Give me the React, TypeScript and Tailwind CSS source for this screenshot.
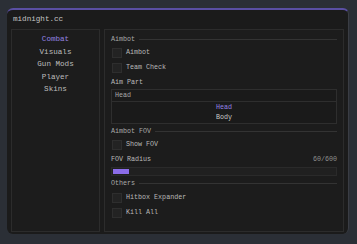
import type React from "react"

const tabs = ["Combat", "Visuals", "Gun Mods", "Player", "Skins"]

const Section: React.FC<{ title: string }> = ({ title }) => (
  <div className="flex items-center gap-[4px] h-[12px]">
    <span className="text-[#a9a9a9]">{title}</span>
    <div className="flex-1 h-px bg-[#333333]"></div>
  </div>
)

const Check: React.FC<{ label: string }> = ({ label }) => (
  <div className="flex items-center gap-[4px] h-[15px] pl-[1px]">
    <div className="w-[10px] h-[10px] bg-[#232323] border border-[#2e2e2e]"></div>
    <span className="text-[#b8b8b8]">{label}</span>
  </div>
)

export default function App() {
  return (
    <div className="w-[357px] h-[244px] bg-[#2b2f36] pt-[8px] pl-[7px]" style={{ fontFamily: '"Liberation Mono", "DejaVu Sans Mono", monospace' }}>
      <div className="w-[342px] h-[226px] bg-[#1b1b1b] rounded-[6px] border-t-2 border-[#5a4fa3] border-r border-r-[#3a3d44] flex flex-col">
        <div className="h-[19px] flex items-center pl-[6px] text-[7.6px] text-[#c4c4c4]">midnight.cc</div>
        <div className="flex-1 flex gap-[4px] px-[4px] pb-[2px]">
          {/* sidebar */}
          <div className="w-[89px] border border-[#2c2c2c] bg-[#1c1c1c] flex flex-col items-center pt-[3px] text-[7.6px]">
            {tabs.map((t, i) => (
              <div key={t} className={`h-[12.5px] leading-[12.5px] ${i === 0 ? "text-[#9482e2]" : "text-[#bcbcbc]"}`}>{t}</div>
            ))}
          </div>

          {/* content */}
          <div className="flex-1 border border-[#2c2c2c] bg-[#1c1c1c] px-[6px] pt-[3px] text-[6.7px] flex flex-col">
            <Section title="Aimbot" />
            <div>
              <Check label="Aimbot" />
              <Check label="Team Check" />
            </div>
            <div className="h-[13px] flex items-center mt-[1px] text-[#bababa]">Aim Part</div>
            <div className="border border-[#2e2e2e] bg-[#1a1a1a]">
              <div className="h-[12px] flex items-center pl-[3px] border-b border-[#2e2e2e] text-[#a8a8a8]">Head</div>
              <div className="h-[10px] flex items-center justify-center text-[#9482e2]">Head</div>
              <div className="h-[11px] flex items-center justify-center text-[#c8c8c8]">Body</div>
            </div>
            <div className="mt-[1px]">
              <Section title="Aimbot FOV" />
            </div>
            <Check label="Show FOV" />
            <div className="h-[13px] flex items-center justify-between mt-[1px] text-[#bababa]">
              <span>FOV Radius</span>
              <span className="text-[#8e8e8e]">60/600</span>
            </div>
            <div className="h-[9px] bg-[#202020] border border-[#2a2a2a] p-px mt-[1px]">
              <div className="h-full w-[16px] bg-[#8b6ce8]"></div>
            </div>
            <div className="mt-[1px]">
              <Section title="Others" />
            </div>
            <div className="mt-[1px]">
              <Check label="Hitbox Expander" />
              <Check label="Kill All" />
            </div>
          </div>
        </div>
      </div>
    </div>
  )
}
